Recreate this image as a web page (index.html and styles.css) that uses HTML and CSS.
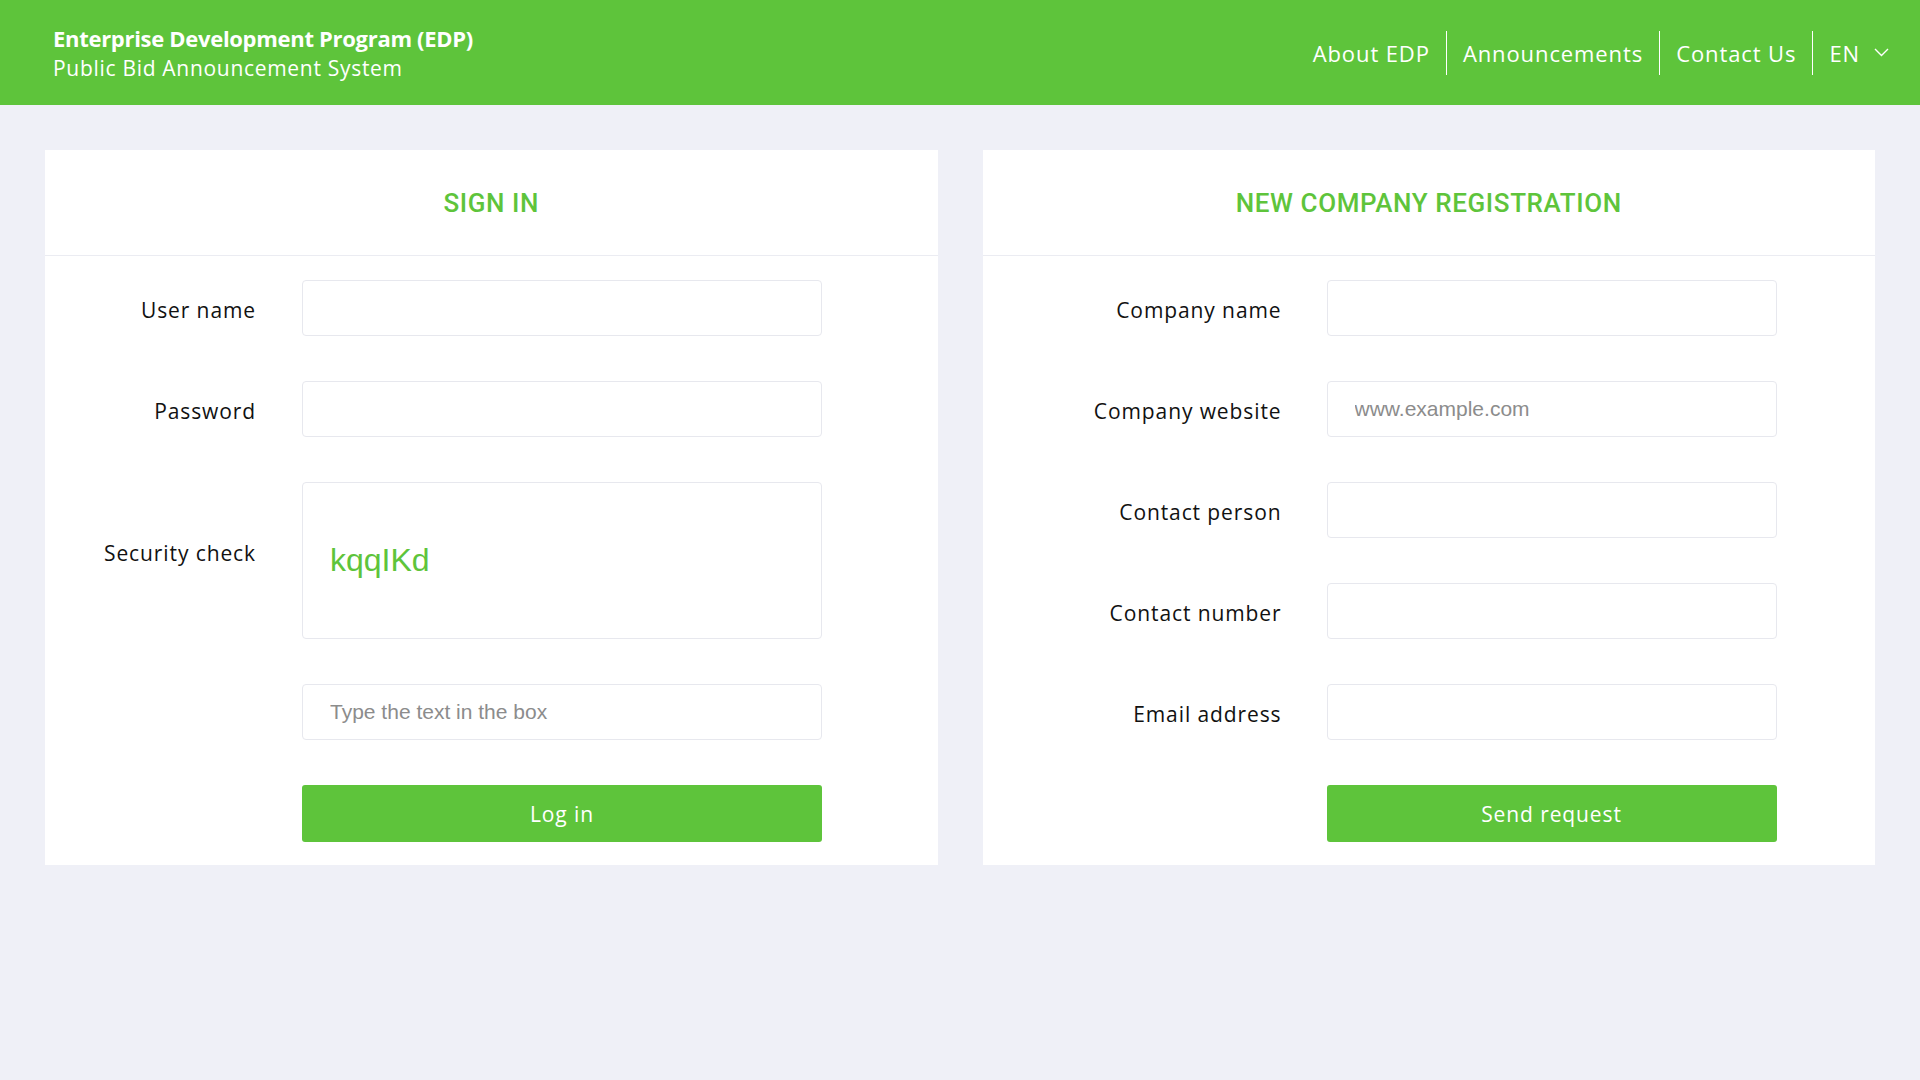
FILE: index.html
```html
<!DOCTYPE html>
<html lang="en">
<head>
    <meta charset="UTF-8">
    <meta name="viewport" content="width=device-width, initial-scale=1.0">
    <title>EDP - Public Bid Announcement System</title>
    <link rel="stylesheet" href="styles.css">
</head>
<body>
    <header class="topbar">
        <div class="brand">
            <div class="brand-title">Enterprise Development Program (EDP)</div>
            <div class="brand-sub">Public Bid Announcement System</div>
        </div>
        <nav class="nav">
            <a href="#" class="nav-link">About EDP</a>
            <a href="#" class="nav-link">Announcements</a>
            <a href="#" class="nav-link">Contact Us</a>
            <a href="#" class="nav-link lang">EN
                <svg class="chevron" width="15" height="9" viewBox="0 0 15 9"><polyline points="1,1 7.5,7.5 14,1" fill="none" stroke="#fff" stroke-width="1.4"/></svg>
            </a>
        </nav>
    </header>

    <main class="content">
        <section class="card card-signin">
            <div class="card-head"><h2>SIGN IN</h2></div>
            <form class="card-body">
                <div class="form-row">
                    <label>User name</label>
                    <input type="text" class="field">
                </div>
                <div class="form-row">
                    <label>Password</label>
                    <input type="password" class="field">
                </div>
                <div class="form-row captcha-row">
                    <label>Security check</label>
                    <div class="captcha">kqqIKd</div>
                </div>
                <div class="form-row">
                    <label></label>
                    <input type="text" class="field" placeholder="Type the text in the box">
                </div>
                <div class="form-row">
                    <label></label>
                    <button type="button" class="btn">Log in</button>
                </div>
            </form>
        </section>

        <section class="card card-register">
            <div class="card-head"><h2>NEW COMPANY REGISTRATION</h2></div>
            <form class="card-body">
                <div class="form-row">
                    <label>Company name</label>
                    <input type="text" class="field">
                </div>
                <div class="form-row">
                    <label>Company website</label>
                    <input type="text" class="field" placeholder="www.example.com">
                </div>
                <div class="form-row">
                    <label>Contact person</label>
                    <input type="text" class="field">
                </div>
                <div class="form-row">
                    <label>Contact number</label>
                    <input type="text" class="field">
                </div>
                <div class="form-row">
                    <label>Email address</label>
                    <input type="text" class="field">
                </div>
                <div class="form-row">
                    <label></label>
                    <button type="button" class="btn">Send request</button>
                </div>
            </form>
        </section>
    </main>
</body>
</html>
```

FILE: styles.css
```css
body {
    margin: 0;
    background-color: #eff0f7;
    font-family: 'Open Sans', 'DejaVu Sans', sans-serif;
    color: #111;
}
.topbar {
    height: 105px;
    background-color: #5ec43b;
    display: flex;
    justify-content: space-between;
    align-items: center;
    padding: 0 31px 0 53px;
    color: #fff;
}
.brand-title {
    font-size: 22px;
    font-weight: 700;
    letter-spacing: -0.3px;
    line-height: 30px;
}
.brand-sub {
    font-size: 21px;
    letter-spacing: 0.7px;
    line-height: 30px;
}
.nav {
    display: flex;
    align-items: center;
}
.nav-link {
    color: #fff;
    text-decoration: none;
    font-size: 22px;
    letter-spacing: 0.9px;
    padding: 0 16px;
    height: 44px;
    display: flex;
    align-items: center;
    border-left: 1px solid #fff;
}
.nav-link:first-child {
    border-left: none;
}
.nav-link.lang {
    padding-right: 0;
}
.chevron {
    margin-left: 14px;
}
.content {
    display: flex;
    align-items: flex-start;
    gap: 45px;
    padding: 45px;
}
.card {
    flex: 1;
    background-color: #fff;
}
.card-head {
    height: 105px;
    border-bottom: 1px solid #ebecf2;
    display: flex;
    justify-content: center;
    align-items: center;
}
.card-head h2 {
    margin: 0;
    font-family: Roboto, 'Liberation Sans', sans-serif;
    font-weight: 500;
    font-size: 26px;
    letter-spacing: 0.6px;
    color: #5ec43b;
}
.card-body {
    padding: 24px 0 23px;
}
.form-row {
    display: flex;
    align-items: center;
    margin-bottom: 45px;
}
.form-row:last-child {
    margin-bottom: 0;
}
.form-row label {
    flex: none;
    text-align: right;
    font-size: 21px;
    letter-spacing: 0.9px;
    padding-top: 4px;
}
.card-signin label {
    width: 211px;
    margin-right: 46px;
}
.card-register label {
    width: 299px;
    margin-right: 45px;
}
.card-signin .field,
.card-signin .captcha,
.card-signin .btn {
    width: 520px;
}
.card-register .field,
.card-register .btn {
    width: 450px;
}
.field {
    box-sizing: border-box;
    height: 56px;
    border: 1px solid #e7e8ee;
    border-radius: 4px;
    padding: 0 27px;
    font-family: 'Liberation Sans', Arial, sans-serif;
    font-size: 21px;
    color: #333;
    outline: none;
}
.field::placeholder {
    color: #8c8c8c;
}
.captcha-row {
    align-items: flex-start;
}
.captcha-row label {
    padding-top: 57px;
}
.captcha {
    box-sizing: border-box;
    height: 157px;
    border: 1px solid #e7e8ee;
    border-radius: 4px;
    padding: 0 27px;
    display: flex;
    align-items: center;
    font-family: 'Liberation Sans', Arial, sans-serif;
    font-size: 32px;
    color: #5ec43b;
}
.btn {
    height: 57px;
    border: none;
    border-radius: 3px;
    background-color: #5ec43b;
    color: #fff;
    font-family: 'Open Sans', 'DejaVu Sans', sans-serif;
    font-size: 21px;
    letter-spacing: 0.9px;
    cursor: pointer;
}
```
